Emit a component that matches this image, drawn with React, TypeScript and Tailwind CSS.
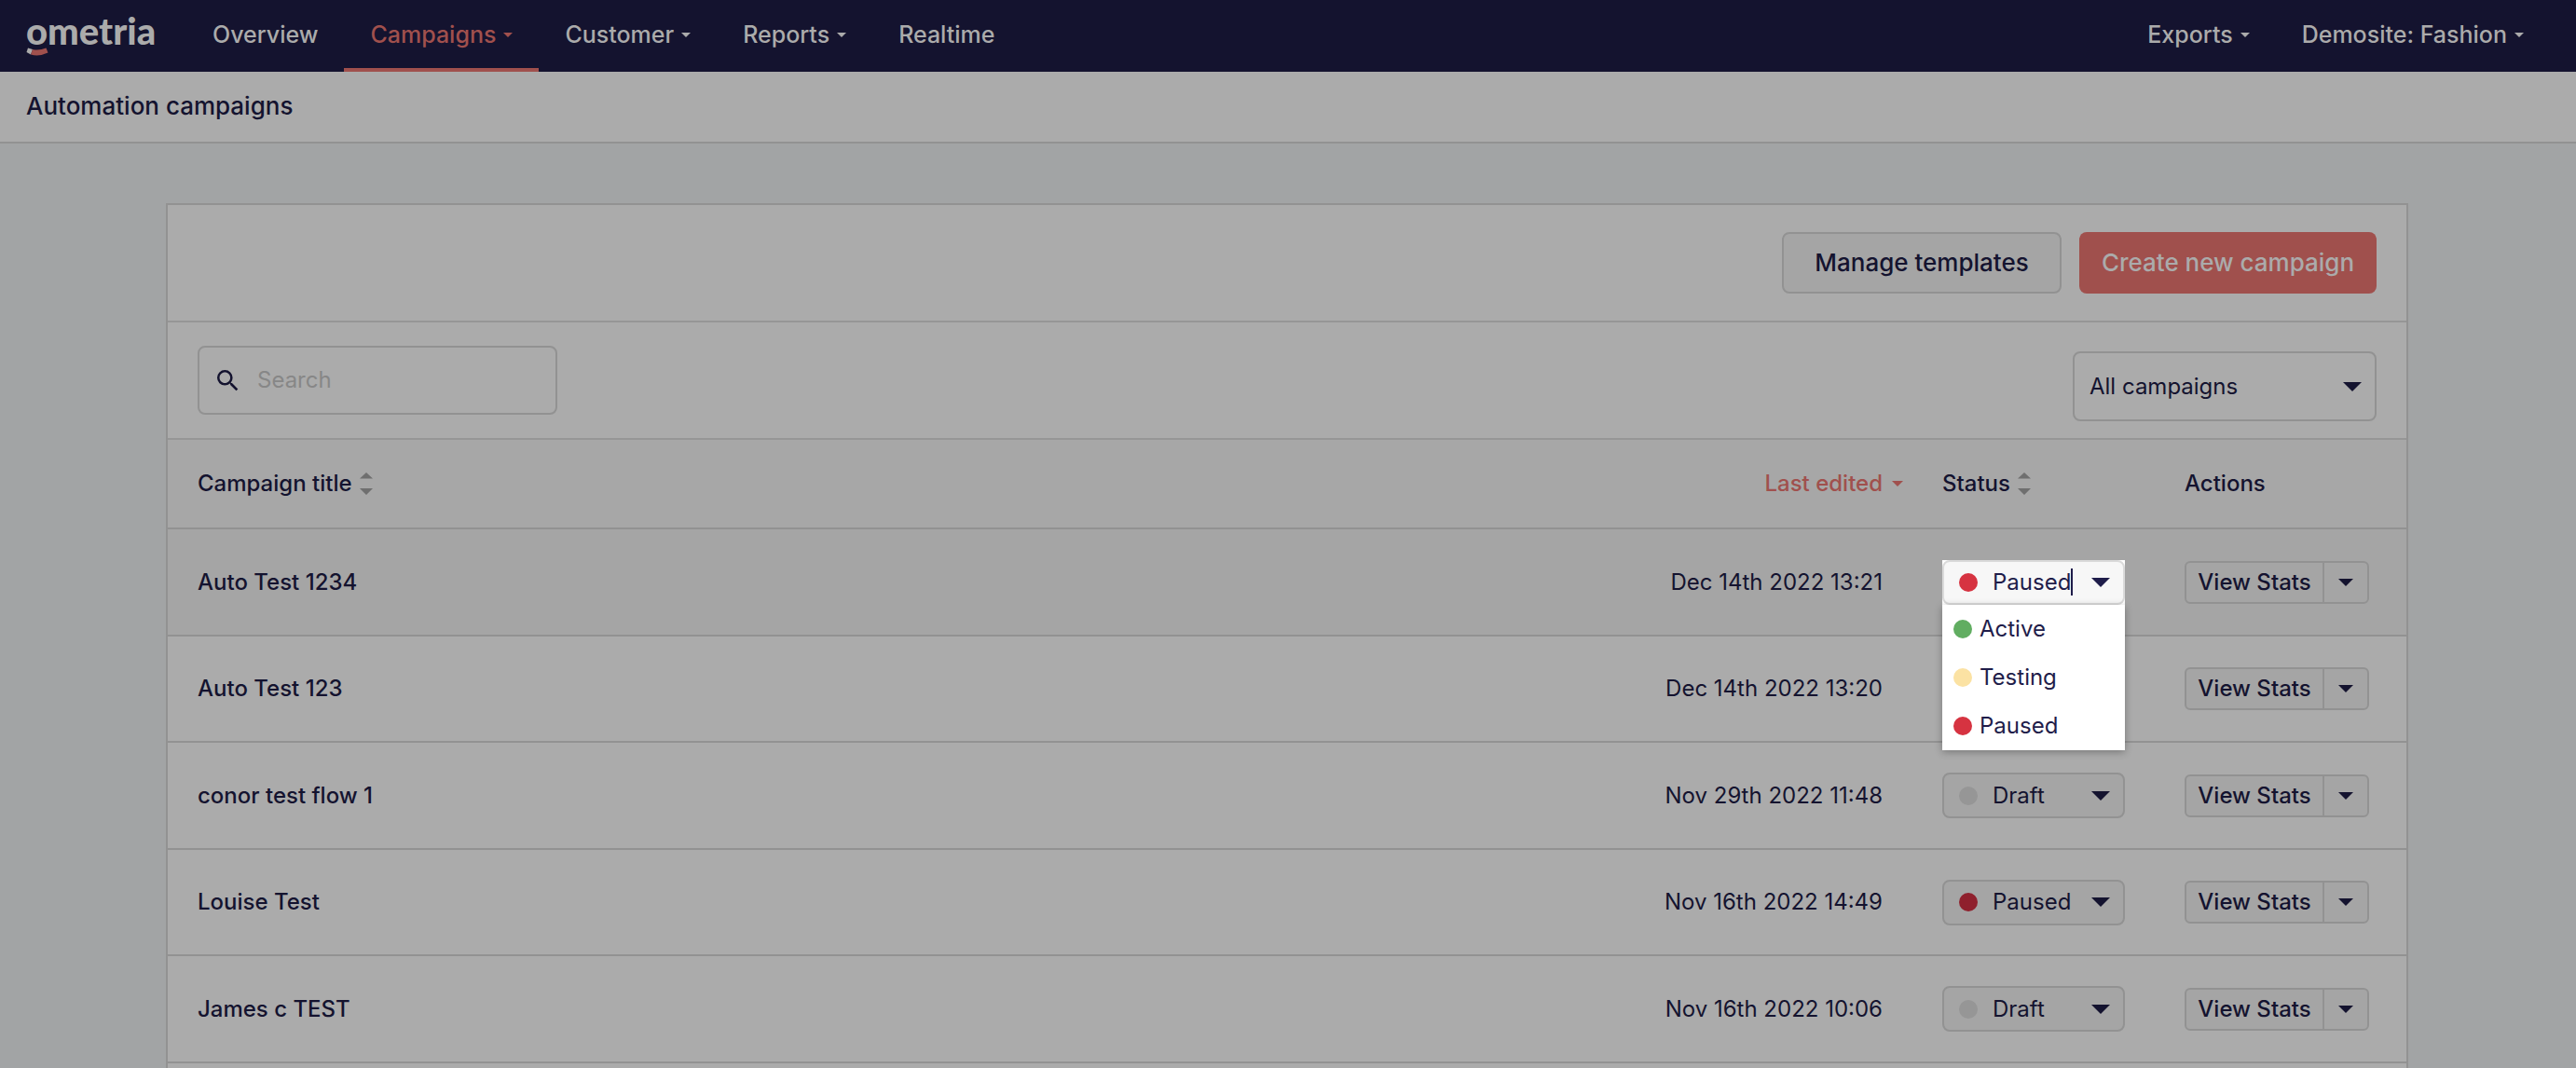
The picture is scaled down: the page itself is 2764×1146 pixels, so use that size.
import type { ReactNode } from 'react';

type Status = 'Active' | 'Testing' | 'Paused' | 'Draft';

const campaigns: { title: string; edited: string; status?: Status; open?: boolean }[] = [
  { title: 'Auto Test 1234', edited: 'Dec 14th 2022 13:21', status: 'Paused', open: true },
  { title: 'Auto Test 123', edited: 'Dec 14th 2022 13:20' },
  { title: 'conor test flow 1', edited: 'Nov 29th 2022 11:48', status: 'Draft' },
  { title: 'Louise Test', edited: 'Nov 16th 2022 14:49', status: 'Paused' },
  { title: 'James c TEST', edited: 'Nov 16th 2022 10:06', status: 'Draft' },
];

function Triangle({ className }: { className: string }) {
  return (
    <svg viewBox="0 0 20 10" preserveAspectRatio="none" aria-hidden="true" className={className}>
      <path d="M0 0H20L10 10Z" fill="currentColor" />
    </svg>
  );
}

function SortIcon() {
  return (
    <svg viewBox="0 0 14 24" aria-hidden="true" className="h-6 w-[14px] text-[#6f6f6f]">
      <path d="M0 6.500L7 0L14 6.500ZM0 17L14 17L7 24Z" fill="currentColor" />
    </svg>
  );
}

function Logo() {
  return (
    <a href="#home" aria-label="ometria home" className="relative w-[200px] shrink-0 pl-7">
      <span className="block font-[Lato] text-[40px] leading-[40px] font-black text-[#ababab]">ometria</span>
      <svg viewBox="0 0 24 9" aria-hidden="true" className="absolute top-[38px] left-7 h-[9px] w-6">
        <path d="M2 0.500L7 2L5 7.500L0.500 5Z" fill="#ababab" />
        <path d="M7 2Q14 3.500 21.500 0.500L23.500 5.500Q14 10 5 7.500Z" fill="#a0504d" />
      </svg>
    </a>
  );
}

function NavItem({ children, caret, active }: { children: ReactNode; caret?: boolean; active?: boolean }) {
  return (
    <a
      href="#nav"
      className={
        active
          ? 'flex items-center gap-2 border-b-4 border-[#a0504d] px-7 pt-0.5 text-[#a0504d]'
          : 'flex items-center gap-2 px-7 pb-0.5 text-[#ababab]'
      }
    >
      {children}
      {caret && <Triangle className="h-[5px] w-[10px]" />}
    </a>
  );
}

function StatusDot({ status }: { status: Status }) {
  const colors = {
    Active: 'bg-[#61ad61]',
    Testing: 'bg-[#fbe2a3]',
    Paused: 'bg-[#8f202d]',
    Draft: 'bg-[#969696]',
  };
  return <span className={`size-5 shrink-0 rounded-full ${colors[status]}`} />;
}

function StatusButton({ status }: { status: Status }) {
  return (
    <button
      type="button"
      className="flex h-[49px] w-[196px] items-center rounded-lg border-2 border-[#929292] bg-[#a5a5a5] pr-[14px] pl-4 text-[#14132f]"
    >
      <StatusDot status={status} />
      <span className="flex-1 pl-4 text-left">{status}</span>
      <Triangle className="h-[10px] w-5" />
    </button>
  );
}

function StatusMenu() {
  const options: { label: Status; color: string }[] = [
    { label: 'Active', color: 'bg-[#61ad61]' },
    { label: 'Testing', color: 'bg-[#fbe2a3]' },
    { label: 'Paused', color: 'bg-[#d63341]' },
  ];
  return (
    <div className="relative w-[196px] text-[#1f1d4a]">
      <button
        type="button"
        aria-haspopup="listbox"
        aria-expanded="true"
        className="flex h-12 w-full items-center bg-white text-left"
      >
        <span className="flex h-full w-full items-center rounded-lg border-2 border-[#dadada] bg-[#f7f7f7] pr-[14px] pl-4">
          <span className="size-5 shrink-0 rounded-full bg-[#d63341]" />
          <span className="flex flex-1 items-center pl-4">
            Paused
            <span className="h-[29px] w-[2px] bg-[#1f1d4a]" />
          </span>
          <Triangle className="h-[10px] w-5" />
        </span>
      </button>
      <ul
        role="listbox"
        aria-label="Status"
        className="absolute top-full left-0 z-10 w-full bg-white shadow-[0_2px_8px_rgba(0,0,0,0.3)]"
      >
        {options.map((o) => (
          <li key={o.label} role="option" aria-selected={o.label === 'Paused'} className="flex h-[52px] items-center gap-2 px-3">
            <span className={`size-5 rounded-full ${o.color}`} />
            {o.label}
          </li>
        ))}
      </ul>
    </div>
  );
}

function RowActions() {
  return (
    <div className="flex h-[46px] w-[198px] rounded-md border-2 border-[#929292] bg-[#a5a5a5] font-medium text-[#14132f]">
      <button type="button" className="flex-1 border-r-2 border-[#929292]">
        View Stats
      </button>
      <button type="button" aria-label="More actions" className="flex w-[46px] items-center justify-center">
        <Triangle className="h-2 w-4" />
      </button>
    </div>
  );
}

export default function App() {
  return (
    <div className="flex min-h-screen flex-col bg-[#a2a4a5] font-[Inter,sans-serif] text-2xl text-[#14132f]">
      <header className="flex h-[77px] items-stretch bg-[#14132f] pr-7 text-[25px] font-medium">
        <div className="flex items-center pb-3">
          <Logo />
        </div>
        <nav className="flex flex-1 items-stretch">
          <NavItem>Overview</NavItem>
          <NavItem caret active>Campaigns</NavItem>
          <NavItem caret>Customer</NavItem>
          <NavItem caret>Reports</NavItem>
          <NavItem>Realtime</NavItem>
        </nav>
        <div className="flex items-stretch">
          <NavItem caret>Exports</NavItem>
          <NavItem caret>Demosite: Fashion</NavItem>
        </div>
      </header>

      <div className="flex h-[77px] items-center border-b-2 border-[#929292] bg-[#ababab] px-7">
        <h1 className="text-[26px] font-medium">Automation campaigns</h1>
      </div>

      <main className="mr-[180px] ml-[178px] mt-16 flex-1 border-x-2 border-t-2 border-[#929292] bg-[#ababab]">
        <div className="flex h-[126px] items-center justify-end gap-[19px] border-b-2 border-[#969696] px-8 text-[26px] font-medium">
          <button type="button" className="h-[66px] w-[300px] rounded-lg border-2 border-[#929292] bg-[#a5a5a5]">
            Manage templates
          </button>
          <button type="button" className="h-[66px] w-[319px] rounded-lg bg-[#a0504d] text-[#ababab]">
            Create new campaign
          </button>
        </div>

        <div className="flex h-[126px] items-start justify-between border-b-2 border-[#969696] px-8 pt-[25px]">
          <label className="flex h-[74px] w-[386px] items-center rounded-lg border-2 border-[#929292] pl-[19px]">
            <svg viewBox="3 3 18 18" aria-hidden="true" className="size-[23px] shrink-0">
              <path
                fill="currentColor"
                d="M15.500 14h-.79l-.28-.27A6.471 6.471 0 0 0 16 9.500 6.500 6.500 0 1 0 9.500 16c1.610 0 3.090-.59 4.230-1.570l.27.280v.79l5 4.990L20.490 19l-4.990-5zm-6 0C7.010 14 5 11.990 5 9.500S7.010 5 9.500 5 14 7.010 14 9.500 11.990 14 9.500 14z"
              />
            </svg>
            <input
              type="text"
              aria-label="Search"
              placeholder="Search"
              className="w-full min-w-0 bg-transparent px-5 outline-none placeholder:text-[#878787]"
            />
          </label>
          <div className="relative mt-[6px]">
            <select
              aria-label="Campaign filter"
              className="h-[75px] w-[326px] appearance-none rounded-lg border-2 border-[#929292] bg-transparent pl-4"
            >
              <option>All campaigns</option>
            </select>
            <Triangle className="pointer-events-none absolute top-[33px] right-4 h-[10px] w-5" />
          </div>
        </div>

        <table className="w-full table-fixed border-collapse">
          <colgroup>
            <col />
            <col className="w-[300px]" />
            <col className="w-[260px]" />
            <col className="w-[238px]" />
          </colgroup>
          <thead>
            <tr className="h-[95px] border-b-2 border-[#929292] bg-[#a7a7a7] text-left">
              <th scope="col" className="pl-8 font-medium">
                <button type="button" className="flex items-center gap-2">
                  Campaign title
                  <SortIcon />
                </button>
              </th>
              <th scope="col" className="font-medium text-[#a0504d]">
                <button type="button" className="ml-auto flex items-center gap-[10px] pr-[42px]">
                  Last edited
                  <Triangle className="h-[6px] w-3" />
                </button>
              </th>
              <th scope="col" className="font-medium">
                <button type="button" className="flex items-center gap-2">
                  Status
                  <SortIcon />
                </button>
              </th>
              <th scope="col" className="font-medium">Actions</th>
            </tr>
          </thead>
          <tbody>
            {campaigns.map((c) => (
              <tr key={c.title} className="h-[115px] border-b-2 border-[#929292] first:bg-[#a5a5a5] even:h-[114px]">
                <td className="pl-8 font-medium">{c.title}</td>
                <td className="pr-16 text-right whitespace-nowrap">{c.edited}</td>
                <td>
                  {c.open && <StatusMenu />}
                  {!c.open && c.status && <StatusButton status={c.status} />}
                </td>
                <td>
                  <RowActions />
                </td>
              </tr>
            ))}
          </tbody>
        </table>
      </main>
    </div>
  );
}
